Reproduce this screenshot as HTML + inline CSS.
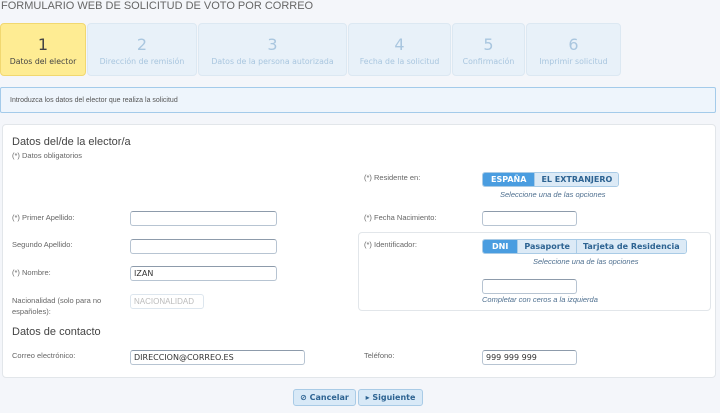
<!DOCTYPE html>
<html><head><meta charset="utf-8"><style>
*{margin:0;padding:0;box-sizing:border-box}
body{width:720px;height:413px;background:#f4f6fa;font-family:"Liberation Sans",sans-serif;position:relative;overflow:hidden}
.a{position:absolute}
.tab{position:absolute;top:23px;height:53px;background:#e8f1f9;border:1px solid #dce8f2;border-radius:4px;text-align:center;color:#a9c6df;font-family:"DejaVu Sans",sans-serif}
.tab .n{font-size:16px;margin-top:11px;height:19px;line-height:19px}
.tab .t{font-size:7.8px;margin-top:3px}
.lbl{position:absolute;font-size:7.5px;color:#666}
.inp{position:absolute;height:15px;background:#fff;border:1px solid #b7c4d2;border-top-color:#8d9bab;border-radius:3px;font-size:8px;color:#333;padding-left:3px;line-height:13px;font-family:"DejaVu Sans",sans-serif}
.seg{position:absolute;height:15px;display:flex;border:1px solid #a9cbe6;border-radius:3px;overflow:hidden;font-family:"DejaVu Sans",sans-serif;font-weight:bold;font-size:8px}
.seg div{padding:0 6px;line-height:13px;color:#2d6392;background:#dceaf6;border-left:1px solid #a9cbe6}
.seg div.on{background:#4a9de0;color:#fff;border-left:none}
.hint{position:absolute;font-size:7.5px;font-style:italic;color:#4e6f8f}
.btn{position:absolute;top:389px;height:17px;background:#d8e9f7;border:1px solid #a9cbe6;border-radius:3px;font-family:"DejaVu Sans",sans-serif;font-weight:bold;font-size:8px;color:#2d6392;line-height:15px;text-align:center}
</style></head><body>
<div class="a" style="left:1px;top:0;font-size:11px;color:#666;line-height:13px">FORMULARIO WEB DE SOLICITUD DE VOTO POR CORREO</div>
<div class="tab" style="left:0;width:86px;background:#feec93;border-color:#f1d870;color:#444"><div class="n">1</div><div class="t">Datos del elector</div></div>
<div class="tab" style="left:87px;width:110px"><div class="n">2</div><div class="t">Dirección de remisión</div></div>
<div class="tab" style="left:198px;width:149px"><div class="n">3</div><div class="t">Datos de la persona autorizada</div></div>
<div class="tab" style="left:348px;width:103px"><div class="n">4</div><div class="t">Fecha de la solicitud</div></div>
<div class="tab" style="left:452px;width:73px"><div class="n">5</div><div class="t">Confirmación</div></div>
<div class="tab" style="left:526px;width:95px"><div class="n">6</div><div class="t">Imprimir solicitud</div></div>
<div class="a" style="left:0;top:87px;width:716px;height:26px;background:#eef5fc;border:1px solid #a4cbea;border-radius:2px;font-size:7px;color:#555;padding:9px 0 0 9px">Introduzca los datos del elector que realiza la solicitud</div>
<div class="a" style="left:2px;top:124px;width:714px;height:254px;background:#fff;border:1px solid #e2e6ea;border-radius:4px"></div>
<div class="a" style="left:12px;top:136px;font-size:11px;color:#444">Datos del/de la elector/a</div>
<div class="lbl" style="left:12px;top:151px">(*) Datos obligatorios</div>
<div class="lbl" style="left:12px;top:213px">(*) Primer Apellido:</div>
<div class="inp" style="left:130px;top:211px;width:147px"></div>
<div class="lbl" style="left:12px;top:240px">Segundo Apellido:</div>
<div class="inp" style="left:130px;top:239px;width:147px"></div>
<div class="lbl" style="left:12px;top:268px">(*) Nombre:</div>
<div class="inp" style="left:130px;top:266px;width:147px">IZAN</div>
<div class="lbl" style="left:12px;top:295px;line-height:11px">Nacionalidad (solo para no<br>españoles):</div>
<div class="inp" style="left:130px;top:294px;width:74px;border-color:#dde6ee;color:#bbb;font-family:'Liberation Sans',sans-serif">NACIONALIDAD</div>
<div class="lbl" style="left:364px;top:173px">(*) Residente en:</div>
<div class="seg" style="left:482px;top:172px"><div class="on" style="padding:0 8px">ESPAÑA</div><div style="padding:0 6px">EL EXTRANJERO</div></div>
<div class="hint" style="left:500px;top:190px">Seleccione una de las opciones</div>
<div class="lbl" style="left:364px;top:213px">(*) Fecha Nacimiento:</div>
<div class="inp" style="left:482px;top:211px;width:95px"></div>
<div class="a" style="left:358px;top:232px;width:353px;height:79px;border:1px solid #e2e6ea;border-radius:4px"></div>
<div class="lbl" style="left:364px;top:240px">(*) Identificador:</div>
<div class="seg" style="left:482px;top:239px"><div class="on" style="padding:0 9px">DNI</div><div>Pasaporte</div><div>Tarjeta de Residencia</div></div>
<div class="hint" style="left:533px;top:257px">Seleccione una de las opciones</div>
<div class="inp" style="left:482px;top:279px;width:95px"></div>
<div class="hint" style="left:482px;top:295px">Completar con ceros a la izquierda</div>
<div class="a" style="left:12px;top:326px;font-size:11px;color:#444">Datos de contacto</div>
<div class="lbl" style="left:12px;top:351px">Correo electrónico:</div>
<div class="inp" style="left:130px;top:350px;width:175px">DIRECCION@CORREO.ES</div>
<div class="lbl" style="left:364px;top:351px">Teléfono:</div>
<div class="inp" style="left:482px;top:350px;width:95px">999 999 999</div>
<div class="btn" style="left:293px;width:63px">⊘ Cancelar</div>
<div class="btn" style="left:358px;width:65px">▸ Siguiente</div>
</body></html>
